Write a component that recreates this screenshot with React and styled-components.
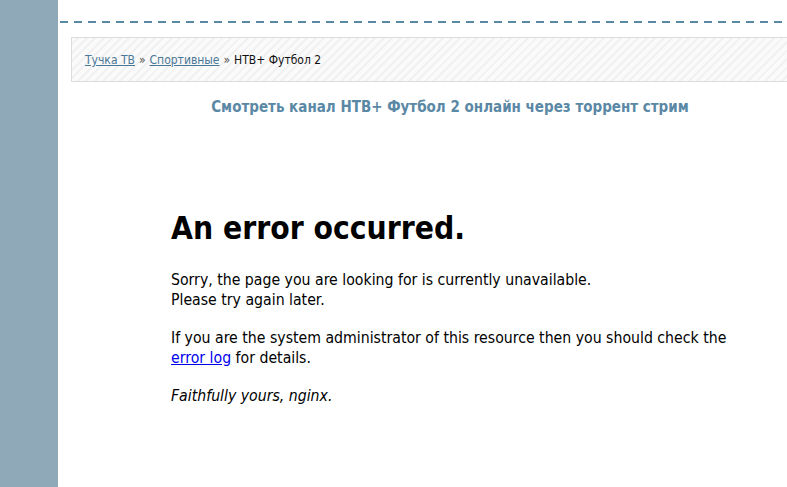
import React from 'react';
import styled, { createGlobalStyle } from 'styled-components';

const GlobalStyle = createGlobalStyle`
    html, body {
        margin: 0;
        padding: 0;
        background: #fff;
    }
    body {
        width: 787px;
        height: 487px;
        overflow: hidden;
    }
`;

const Page = styled.div`
    display: flex;
    height: 487px;
`;

const Sidebar = styled.div`
    width: 58px;
    flex-shrink: 0;
    background: #8fa9b9;
`;

const Main = styled.div`
    flex: 1;
    padding-top: 21px;
    overflow: hidden;
`;

const Dashed = styled.div`
    height: 2px;
    margin-left: 2px;
    background: repeating-linear-gradient(90deg, #5a89a6 0 8px, transparent 8px 14px);
`;

const Breadcrumbs = styled.div`
    margin: 14px -20px 0 13px;
    height: 42px;
    border: 1px solid #dcdcdc;
    background: repeating-linear-gradient(-45deg, #fafafa 0 4px, #f1f1f1 4px 6px);
    display: flex;
    align-items: center;
    padding-left: 13px;
    padding-top: 1px;
    font-family: "DejaVu Sans Condensed", "DejaVu Sans", sans-serif;
    font-size: 12px;
    color: #111;
`;

const Crumb = styled.a`
    color: #4a7898;
    text-decoration: underline;
`;

const Sep = styled.span`
    margin: 0 4px;
    color: #555;
`;

const Title = styled.h2`
    margin: 16px 0 0;
    text-align: center;
    font-family: "DejaVu Sans Condensed", "DejaVu Sans", sans-serif;
    font-size: 15px;
    font-weight: bold;
    color: #5a88a5;
    padding-left: 55px;
`;

const ErrorBlock = styled.div`
    margin: 94px 0 0 113px;
    width: 580px;
    font-family: "DejaVu Sans Condensed", "DejaVu Sans", sans-serif;
    font-size: 15.7px;
    color: #000;
`;

const Heading = styled.h1`
    margin: 0 0 24px;
    font-size: 31.5px;
    font-weight: bold;
    line-height: 36px;
`;

const Para = styled.p`
    margin: 0 0 18px;
    line-height: 20px;
    font-style: ${p => (p.$italic ? 'italic' : 'normal')};
`;

const Link = styled.a`
    color: #0000ee;
    text-decoration: underline;
`;

export default function App() {
    return (
        <>
            <GlobalStyle />
            <Page>
                <Sidebar />
                <Main>
                    <Dashed />
                    <Breadcrumbs>
                        <Crumb href="#">Тучка ТВ</Crumb>
                        <Sep>»</Sep>
                        <Crumb href="#">Спортивные</Crumb>
                        <Sep>»</Sep>
                        <span>НТВ+ Футбол 2</span>
                    </Breadcrumbs>
                    <Title>Смотреть канал НТВ+ Футбол 2 онлайн через торрент стрим</Title>
                    <ErrorBlock>
                        <Heading>An error occurred.</Heading>
                        <Para>
                            Sorry, the page you are looking for is currently unavailable.
                            <br />
                            Please try again later.
                        </Para>
                        <Para>
                            If you are the system administrator of this resource then you should check the{' '}
                            <Link href="#">error log</Link> for details.
                        </Para>
                        <Para $italic>Faithfully yours, nginx.</Para>
                    </ErrorBlock>
                </Main>
            </Page>
        </>
    );
}
